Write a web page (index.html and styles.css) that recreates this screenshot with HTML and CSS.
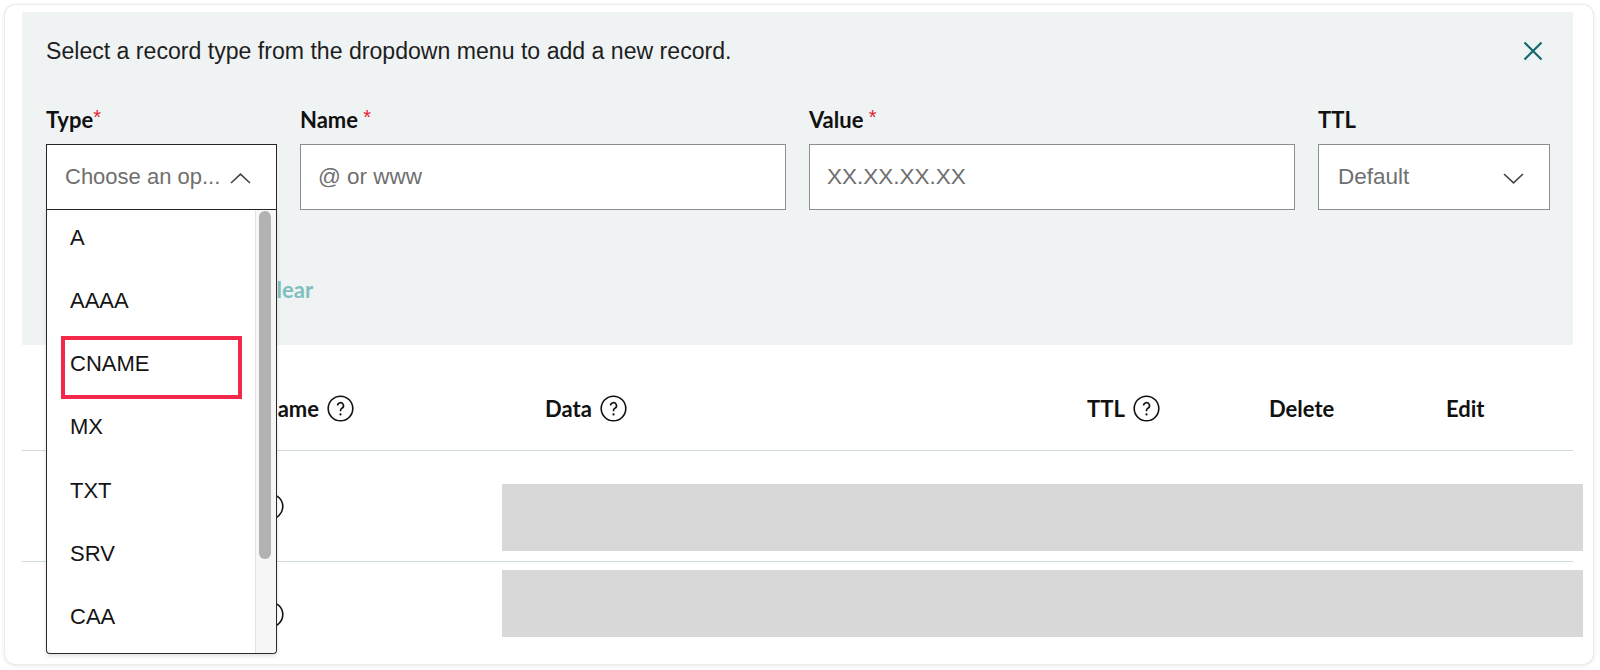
FILE: index.html
```html
<!DOCTYPE html>
<html lang="en">
<head>
<meta charset="utf-8">
<title>Add DNS record</title>
<link rel="stylesheet" href="styles.css">
</head>
<body>
<div class="card">
  <section class="panel">
    <div class="panel-head">
      <p class="intro">Select a record type from the dropdown menu to add a new record.</p>
      <button class="close" aria-label="Close">
        <svg width="20" height="20" viewBox="0 0 20 20"><path d="M1.5 1.5L18.5 18.5M18.5 1.5L1.5 18.5" stroke="#13696b" stroke-width="2.2" fill="none"/></svg>
      </button>
    </div>
    <div class="fields">
      <div class="field">
        <label class="label">Type<span class="req req-tight">*</span></label>
        <div class="select">
          <div class="input input-open">
            <span class="placeholder">Choose an op...</span>
            <svg class="chev" width="21" height="11" viewBox="0 0 21 11"><polyline points="1,10 10.5,1.2 20,10" fill="none" stroke="#444" stroke-width="1.6"/></svg>
          </div>
          <div class="menu">
            <ul class="menu-list">
              <li class="menu-item">A</li>
              <li class="menu-item">AAAA</li>
              <li class="menu-item">CNAME<span class="highlight"></span></li>
              <li class="menu-item">MX</li>
              <li class="menu-item">TXT</li>
              <li class="menu-item">SRV</li>
              <li class="menu-item">CAA</li>
            </ul>
            <div class="menu-track"><div class="menu-thumb"></div></div>
          </div>
        </div>
      </div>
      <div class="field">
        <label class="label">Name <span class="req">*</span></label>
        <div class="input"><span class="placeholder">@ or www</span></div>
      </div>
      <div class="field">
        <label class="label">Value <span class="req">*</span></label>
        <div class="input"><span class="placeholder">XX.XX.XX.XX</span></div>
      </div>
      <div class="field">
        <label class="label">TTL</label>
        <div class="input input-select">
          <span class="placeholder">Default</span>
          <svg class="chev" width="21" height="11" viewBox="0 0 21 11"><polyline points="1,1 10.5,9.8 20,1" fill="none" stroke="#444" stroke-width="1.6"/></svg>
        </div>
      </div>
    </div>
    <div class="actions">
      <div class="btn-save"></div>
      <a class="link-clear">Clear</a>
    </div>
  </section>

  <section class="records">
    <div class="thead">
      <div class="th"></div>
      <div class="th">Name <svg class="help" width="27" height="27" viewBox="0 0 27 27"><circle cx="13.5" cy="13.5" r="12.3" fill="none" stroke="#111" stroke-width="1.6"/><path d="M10.6 10.6a2.95 2.95 0 1 1 4.3 2.6c-1 .5-1.4 1.1-1.4 2.2v.9" fill="none" stroke="#111" stroke-width="1.6"/><circle cx="13.5" cy="19.4" r="1.1" fill="#111"/></svg></div>
      <div class="th">Data <svg class="help" width="27" height="27" viewBox="0 0 27 27"><circle cx="13.5" cy="13.5" r="12.3" fill="none" stroke="#111" stroke-width="1.6"/><path d="M10.6 10.6a2.95 2.95 0 1 1 4.3 2.6c-1 .5-1.4 1.1-1.4 2.2v.9" fill="none" stroke="#111" stroke-width="1.6"/><circle cx="13.5" cy="19.4" r="1.1" fill="#111"/></svg></div>
      <div class="th">TTL <svg class="help" width="27" height="27" viewBox="0 0 27 27"><circle cx="13.5" cy="13.5" r="12.3" fill="none" stroke="#111" stroke-width="1.6"/><path d="M10.6 10.6a2.95 2.95 0 1 1 4.3 2.6c-1 .5-1.4 1.1-1.4 2.2v.9" fill="none" stroke="#111" stroke-width="1.6"/><circle cx="13.5" cy="19.4" r="1.1" fill="#111"/></svg></div>
      <div class="th">Delete</div>
      <div class="th">Edit</div>
    </div>
    <div class="row row-first">
      <div class="row-left"><svg class="help row-help" width="27" height="27" viewBox="0 0 27 27"><circle cx="13.5" cy="13.5" r="12.3" fill="none" stroke="#111" stroke-width="1.6"/><path d="M10.6 10.6a2.95 2.95 0 1 1 4.3 2.6c-1 .5-1.4 1.1-1.4 2.2v.9" fill="none" stroke="#111" stroke-width="1.6"/><circle cx="13.5" cy="19.4" r="1.1" fill="#111"/></svg></div>
      <div class="redacted"></div>
    </div>
    <div class="row row-second">
      <div class="row-left"><svg class="help row-help" width="27" height="27" viewBox="0 0 27 27"><circle cx="13.5" cy="13.5" r="12.3" fill="none" stroke="#111" stroke-width="1.6"/><path d="M10.6 10.6a2.95 2.95 0 1 1 4.3 2.6c-1 .5-1.4 1.1-1.4 2.2v.9" fill="none" stroke="#111" stroke-width="1.6"/><circle cx="13.5" cy="19.4" r="1.1" fill="#111"/></svg></div>
      <div class="redacted"></div>
    </div>
  </section>
</div>
</body>
</html>
```
FILE: styles.css
```css
* { box-sizing: border-box; }
html, body { margin: 0; background: #fff; }
body {
  padding: 5px 7px 6px 5px;
  font-family: "Liberation Sans", Arial, sans-serif;
  color: #1b1b1b;
}
ul { margin: 0; padding: 0; list-style: none; }
p { margin: 0; }
button { font: inherit; border: 0; background: none; padding: 0; }

.card {
  height: 659px;
  border-radius: 10px;
  background: #fff;
  box-shadow: 0 0 0 1px #ebebeb, 0 1px 4px rgba(0, 0, 0, 0.13);
  padding: 7px 20px 0 17px;
}

/* ---------- add-record panel ---------- */
.panel {
  background: #f0f3f4;
  padding: 24px 23px 31px 24px;
}
.panel-head {
  display: flex;
  align-items: center;
  justify-content: space-between;
  height: 30px;
}
.intro {
  font-size: 23.1px;
  line-height: 30px;
  color: #1e1e1e;
}
.close {
  display: flex;
  width: 20px;
  height: 20px;
  margin-right: 7px;
}

.fields {
  display: grid;
  grid-template-columns: 231px 486px 486px 232px;
  column-gap: 23px;
  margin-top: 40px;
}
.label {
  display: block;
  font-family: Lato, "Liberation Sans", sans-serif;
  font-weight: 700;
  font-size: 22px;
  line-height: 28px;
  color: #111;
  margin-bottom: 10px;
}
.req {
  color: #e3222f;
  font-family: "Liberation Sans", Arial, sans-serif;
  font-weight: 400;
  font-size: 20px;
  vertical-align: top;
  line-height: 22px;
}
.req-tight { margin-left: 0; }

.input {
  height: 66px;
  border: 1px solid #8d8d8d;
  background: #fff;
  display: flex;
  align-items: center;
  justify-content: space-between;
  padding: 0 25px 0 17px;
  font-size: 22.5px;
}
.placeholder { color: #6f6f6f; }
.input-open {
  border-color: #262626;
  padding-left: 18px;
  font-size: 22px;
}
.input-open .chev { margin-top: 3px; }
.input-select { padding-left: 19px; }
.input-select .chev { margin-top: 2px; }

/* ---------- open type dropdown ---------- */
.select { position: relative; }
.menu {
  position: absolute;
  z-index: 10;
  top: 100%;
  left: 0;
  right: 0;
  height: 444px;
  display: flex;
  background: #fff;
  border: 1px solid #2a2a2a;
  border-top: 0;
  border-radius: 0 0 4px 4px;
  box-shadow: 0 2px 4px rgba(0, 0, 0, 0.12);
}
.menu-list { flex: 1; margin-top: -4px; }
.menu-item {
  position: relative;
  height: 63.25px;
  display: flex;
  align-items: center;
  padding-left: 23px;
  font-size: 22px;
  color: #141414;
}
.highlight {
  position: absolute;
  top: 3px;
  bottom: -3px;
  left: 14px;
  right: 13px;
  border: 4px solid #f4284b;
}
.menu-track {
  width: 21px;
  background: #f6f6f6;
  border-left: 1px solid #e2e2e2;
  padding: 1px 0 0 3px;
  border-bottom-right-radius: 4px;
}
.menu-thumb {
  width: 12px;
  height: 348px;
  border-radius: 6px;
  background: #b2b2b2;
}

.actions {
  display: flex;
  align-items: center;
  gap: 26px;
  height: 48px;
  margin-top: 56px;
}
.btn-save {
  width: 190px;
  height: 48px;
}
.link-clear {
  font-family: Lato, "Liberation Sans", sans-serif;
  font-weight: 700;
  font-size: 22px;
  line-height: 28px;
  color: #80bfc0;
}

/* ---------- records table ---------- */
.thead {
  display: grid;
  grid-template-columns: 215px 284px 542px 182px 177px 1fr;
  align-items: end;
  height: 106px;
  padding: 0 0 28px 24px;
  border-bottom: 1px solid #d0dbe1;
}
.th {
  display: flex;
  align-items: center;
  gap: 8px;
  height: 28px;
  font-family: Lato, "Liberation Sans", sans-serif;
  font-weight: 700;
  font-size: 22px;
  color: #111;
}
.help { flex: none; display: block; }

.row {
  display: flex;
  align-items: flex-start;
}
.row-first {
  padding: 33px 0 10px;
  border-bottom: 1px solid #d0dbe1;
}
.row-second { padding-top: 8px; }
.row-left {
  width: 480px;
  flex: none;
  padding-left: 235px;
}
.row-first .row-help { margin-top: 9px; }
.row-second .row-help { margin-top: 31px; }
.redacted {
  flex: 1;
  height: 67px;
  margin-right: -10px;
  background: #d8d8d8;
}
.row-second .redacted { height: 67px; }
```
